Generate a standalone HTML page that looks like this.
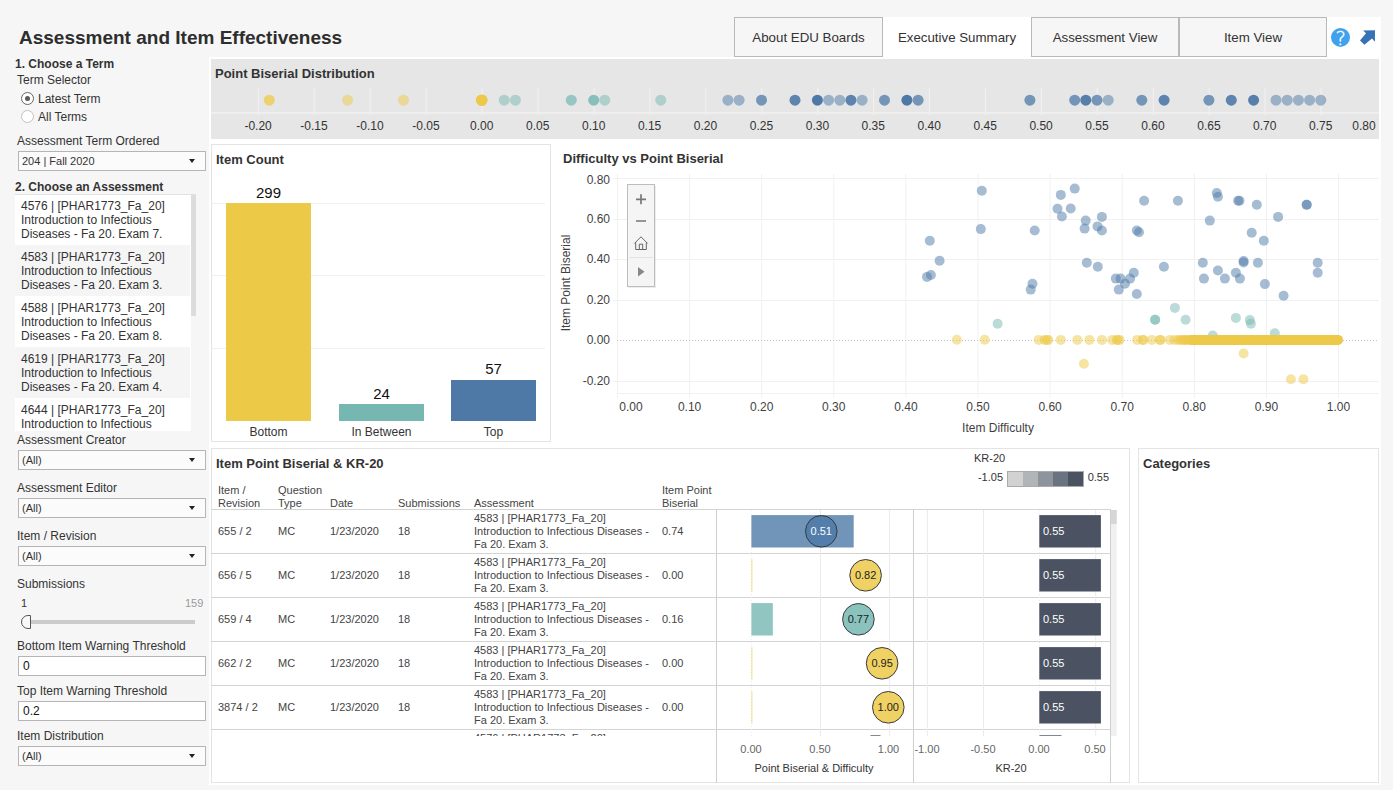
<!DOCTYPE html>
<html><head><meta charset="utf-8"><title>Assessment and Item Effectiveness</title>
<style>
*{box-sizing:border-box}
html,body{margin:0;padding:0}
body{width:1393px;height:790px;overflow:hidden;background:#f6f6f6;font-family:"Liberation Sans", Arial, sans-serif;color:#333;position:relative;font-size:12px}
.abs,.abs>*{position:absolute}
.a{position:absolute;white-space:nowrap}
.title{left:19px;top:26.5px;font-size:19px;font-weight:bold;color:#2e2e2e;line-height:22px}
.tab{position:absolute;top:17px;height:40px;width:149px;border:1px solid #b9b9b9;font-size:13.3px;line-height:40px;text-align:center;color:#333;background:#f6f6f6}
.tab.sel{background:#fff;border-color:#fff;height:42px}
.h{font-weight:bold;font-size:12px;color:#333}
.lbl{font-size:12px;color:#333}
.dd{position:absolute;left:18px;width:188px;height:20px;border:1px solid #b5b5b5;background:#fbfbfb;font-size:11px;line-height:18px;padding-left:3px;color:#333}
.dd:after{content:"";position:absolute;right:10px;top:7px;border-left:3px solid transparent;border-right:3px solid transparent;border-top:4px solid #222}
.inp{position:absolute;left:18px;width:188px;height:20px;border:1px solid #b5b5b5;background:#fff;font-size:12px;line-height:18px;padding-left:4px;color:#111}
.panel{position:absolute;background:#fff;border:1px solid #e4e4e4}
.pt{position:absolute;font-weight:bold;font-size:13px;color:#333;white-space:nowrap}
.li{position:absolute;left:0;width:175px;height:51px;padding:4px 0 0 6px;font-size:12px;line-height:14px;color:#333;white-space:nowrap}
.tr{position:absolute;left:0;width:505px;height:44px;border-bottom:1px solid #d4d4d4;font-size:11px;color:#444}
.tr span{position:absolute;top:15px;line-height:13px;white-space:nowrap}
.tr .as{position:absolute;left:263px;top:2px;line-height:13px;white-space:nowrap}
.th{position:absolute;font-size:11px;line-height:13px;color:#444;white-space:nowrap}
svg text{font-family:"Liberation Sans", Arial, sans-serif}
</style></head><body>

<div class="a title">Assessment and Item Effectiveness</div>

<div class="tab" style="left:734px">About EDU Boards</div>
<div class="tab sel" style="left:883px;width:148px">Executive Summary</div>
<div class="tab" style="left:1031px;width:148px">Assessment View</div>
<div class="tab" style="left:1179px;width:148px">Item View</div>
<div style="position:absolute;left:1327px;top:17px;width:54px;height:42px;background:#fff"></div>
<svg style="position:absolute;left:1327px;top:17px" width="53" height="42" viewBox="0 0 53 42">
<circle cx="13.5" cy="20.4" r="9.5" fill="#41a1ec"/>
<text x="13.6" y="27.5" text-anchor="middle" font-size="19.5" font-weight="200" stroke="#fff" stroke-width="0.35" style="font-family:'DejaVu Sans Light','DejaVu Sans',sans-serif" fill="#fff">?</text>
<path d="M36.1 13.4 L48 13.3 L47.9 24.7 L45 21.6 L37.4 27.8 L33 23.5 L39 16.3 Z" fill="#3672b4"/>
</svg>

<!-- left controls -->
<div class="a h" style="left:15px;top:57px">1. Choose a Term</div>
<div class="a lbl" style="left:17px;top:73px">Term Selector</div>
<div style="position:absolute;left:21px;top:92px;width:13px;height:13px;border:1px solid #666;border-radius:50%;background:#fff"></div>
<div style="position:absolute;left:25px;top:96px;width:5px;height:5px;border-radius:50%;background:#5a5a5a"></div>
<div class="a lbl" style="left:38px;top:92px">Latest Term</div>
<div style="position:absolute;left:21px;top:110px;width:13px;height:13px;border:1px solid #c2c2c2;border-radius:50%;background:#fff"></div>
<div class="a lbl" style="left:38px;top:110px">All Terms</div>
<div class="a lbl" style="left:17px;top:134px">Assessment Term Ordered</div>
<div class="dd" style="top:151px">204 | Fall 2020</div>
<div class="a h" style="left:15px;top:180px">2. Choose an Assessment</div>
<div style="position:absolute;left:15px;top:194px;width:181px;height:1px;background:#e2e2e2"></div>
<div style="position:absolute;left:15px;top:195px;width:176px;height:236px;overflow:hidden;background:#fff"><div class="li" style="top:0px;padding-top:4px;background:#fff">4576 | [PHAR1773_Fa_20]<br>Introduction to Infectious<br>Diseases - Fa 20. Exam 7.</div><div class="li" style="top:50px;padding-top:5px;background:#f5f5f5">4583 | [PHAR1773_Fa_20]<br>Introduction to Infectious<br>Diseases - Fa 20. Exam 3.</div><div class="li" style="top:101px;padding-top:5px;background:#fff">4588 | [PHAR1773_Fa_20]<br>Introduction to Infectious<br>Diseases - Fa 20. Exam 8.</div><div class="li" style="top:152px;padding-top:5px;background:#f5f5f5">4619 | [PHAR1773_Fa_20]<br>Introduction to Infectious<br>Diseases - Fa 20. Exam 4.</div><div class="li" style="top:203px;padding-top:5px;background:#fff">4644 | [PHAR1773_Fa_20]<br>Introduction to Infectious<br>Diseases - Fa 20. Exam 9.</div></div>
<div style="position:absolute;left:191px;top:195px;width:5px;height:121px;background:#dcdcdc"></div>
<div class="a lbl" style="left:17px;top:433px">Assessment Creator</div>
<div class="dd" style="top:450px">(All)</div>
<div class="a lbl" style="left:17px;top:481px">Assessment Editor</div>
<div class="dd" style="top:498px">(All)</div>
<div class="a lbl" style="left:17px;top:529px">Item / Revision</div>
<div class="dd" style="top:546px">(All)</div>
<div class="a lbl" style="left:17px;top:577px">Submissions</div>
<div class="a" style="left:21px;top:597px;font-size:11px;color:#333">1</div>
<div class="a" style="left:185px;top:597px;font-size:11px;color:#9a9a9a">159</div>
<div style="position:absolute;left:27px;top:619.500px;width:168px;height:4.500px;background:#cbcbcb"></div>
<div style="position:absolute;left:21px;top:615px;width:10px;height:14px;border:1px solid #555;border-radius:7px 0 0 7px;background:#f8f8f8"></div>
<div class="a lbl" style="left:17px;top:639px">Bottom Item Warning Threshold</div>
<div class="inp" style="top:656px">0</div>
<div class="a lbl" style="left:17px;top:684px">Top Item Warning Threshold</div>
<div class="inp" style="top:701px">0.2</div>
<div class="a lbl" style="left:17px;top:729px">Item Distribution</div>
<div class="dd" style="top:746px">(All)</div>

<div style="position:absolute;left:209px;top:57px;width:1172px;height:728px;background:#fff"></div>
<!-- distribution -->
<div style="position:absolute;left:211.300px;top:59.300px;width:1167.500px;height:80.100px;background:#e6e6e6"></div>
<div class="pt" style="left:215px;top:66px">Point Biserial Distribution</div>
<svg style="position:absolute;left:211px;top:58px" width="1168" height="82" viewBox="0 0 1168 82" font-size="12" fill="#333">
<line x1="0" y1="54.9" x2="1168" y2="54.9" stroke="#f3f3f3" stroke-width="1.2"/>
<line x1="47.4" y1="30.3" x2="47.4" y2="57.5" stroke="#f0f0f0" stroke-width="1.2"/><line x1="103.3" y1="30.3" x2="103.3" y2="57.5" stroke="#f0f0f0" stroke-width="1.2"/><line x1="159.2" y1="30.3" x2="159.2" y2="57.5" stroke="#f0f0f0" stroke-width="1.2"/><line x1="215.2" y1="30.3" x2="215.2" y2="57.5" stroke="#f0f0f0" stroke-width="1.2"/><line x1="271.1" y1="30.3" x2="271.1" y2="57.5" stroke="#f0f0f0" stroke-width="1.2"/><line x1="327.0" y1="30.3" x2="327.0" y2="57.5" stroke="#f0f0f0" stroke-width="1.2"/><line x1="383.0" y1="30.3" x2="383.0" y2="57.5" stroke="#f0f0f0" stroke-width="1.2"/><line x1="438.9" y1="30.3" x2="438.9" y2="57.5" stroke="#f0f0f0" stroke-width="1.2"/><line x1="494.8" y1="30.3" x2="494.8" y2="57.5" stroke="#f0f0f0" stroke-width="1.2"/><line x1="550.8" y1="30.3" x2="550.8" y2="57.5" stroke="#f0f0f0" stroke-width="1.2"/><line x1="606.7" y1="30.3" x2="606.7" y2="57.5" stroke="#f0f0f0" stroke-width="1.2"/><line x1="662.6" y1="30.3" x2="662.6" y2="57.5" stroke="#f0f0f0" stroke-width="1.2"/><line x1="718.5" y1="30.3" x2="718.5" y2="57.5" stroke="#f0f0f0" stroke-width="1.2"/><line x1="774.5" y1="30.3" x2="774.5" y2="57.5" stroke="#f0f0f0" stroke-width="1.2"/><line x1="830.4" y1="30.3" x2="830.4" y2="57.5" stroke="#f0f0f0" stroke-width="1.2"/><line x1="886.3" y1="30.3" x2="886.3" y2="57.5" stroke="#f0f0f0" stroke-width="1.2"/><line x1="942.3" y1="30.3" x2="942.3" y2="57.5" stroke="#f0f0f0" stroke-width="1.2"/><line x1="998.2" y1="30.3" x2="998.2" y2="57.5" stroke="#f0f0f0" stroke-width="1.2"/><line x1="1054.1" y1="30.3" x2="1054.1" y2="57.5" stroke="#f0f0f0" stroke-width="1.2"/><line x1="1110.0" y1="30.3" x2="1110.0" y2="57.5" stroke="#f0f0f0" stroke-width="1.2"/><circle cx="58.3" cy="42.2" r="5.5" fill="#edc948" fill-opacity="0.75"/><circle cx="136.6" cy="42.2" r="5.5" fill="#edc948" fill-opacity="0.5"/><circle cx="192.5" cy="42.2" r="5.5" fill="#edc948" fill-opacity="0.5"/><circle cx="270.8" cy="42.2" r="5.5" fill="#edc948" fill-opacity="0.9"/><circle cx="270.8" cy="42.2" r="5.5" fill="#edc948" fill-opacity="0.9"/><circle cx="270.8" cy="42.2" r="5.5" fill="#edc948" fill-opacity="0.9"/><circle cx="270.8" cy="42.2" r="5.5" fill="#edc948" fill-opacity="0.9"/><circle cx="270.8" cy="42.2" r="5.5" fill="#edc948" fill-opacity="0.9"/><circle cx="270.8" cy="42.2" r="5.5" fill="#edc948" fill-opacity="0.9"/><circle cx="293.2" cy="42.2" r="5.5" fill="#76b7b2" fill-opacity="0.5"/><circle cx="304.4" cy="42.2" r="5.5" fill="#76b7b2" fill-opacity="0.5"/><circle cx="360.3" cy="42.2" r="5.5" fill="#76b7b2" fill-opacity="0.7"/><circle cx="382.7" cy="42.2" r="5.5" fill="#76b7b2" fill-opacity="0.85"/><circle cx="393.8" cy="42.2" r="5.5" fill="#76b7b2" fill-opacity="0.5"/><circle cx="449.8" cy="42.2" r="5.5" fill="#76b7b2" fill-opacity="0.5"/><circle cx="516.9" cy="42.2" r="5.5" fill="#4e79a7" fill-opacity="0.5"/><circle cx="528.1" cy="42.2" r="5.5" fill="#4e79a7" fill-opacity="0.5"/><circle cx="550.5" cy="42.2" r="5.5" fill="#4e79a7" fill-opacity="0.75"/><circle cx="584.0" cy="42.2" r="5.5" fill="#4e79a7" fill-opacity="0.9"/><circle cx="606.4" cy="42.2" r="5.5" fill="#4e79a7" fill-opacity="1"/><circle cx="617.6" cy="42.2" r="5.5" fill="#4e79a7" fill-opacity="0.5"/><circle cx="628.8" cy="42.2" r="5.5" fill="#4e79a7" fill-opacity="0.5"/><circle cx="639.9" cy="42.2" r="5.5" fill="#4e79a7" fill-opacity="0.9"/><circle cx="651.1" cy="42.2" r="5.5" fill="#4e79a7" fill-opacity="0.5"/><circle cx="673.5" cy="42.2" r="5.5" fill="#4e79a7" fill-opacity="0.75"/><circle cx="695.9" cy="42.2" r="5.5" fill="#4e79a7" fill-opacity="1"/><circle cx="707.1" cy="42.2" r="5.5" fill="#4e79a7" fill-opacity="0.75"/><circle cx="818.9" cy="42.2" r="5.5" fill="#4e79a7" fill-opacity="0.75"/><circle cx="863.7" cy="42.2" r="5.5" fill="#4e79a7" fill-opacity="0.75"/><circle cx="874.8" cy="42.2" r="5.5" fill="#4e79a7" fill-opacity="0.95"/><circle cx="886.0" cy="42.2" r="5.5" fill="#4e79a7" fill-opacity="0.75"/><circle cx="897.2" cy="42.2" r="5.5" fill="#4e79a7" fill-opacity="0.5"/><circle cx="930.8" cy="42.2" r="5.5" fill="#4e79a7" fill-opacity="0.75"/><circle cx="953.1" cy="42.2" r="5.5" fill="#4e79a7" fill-opacity="0.9"/><circle cx="997.9" cy="42.2" r="5.5" fill="#4e79a7" fill-opacity="0.75"/><circle cx="1020.3" cy="42.2" r="5.5" fill="#4e79a7" fill-opacity="0.9"/><circle cx="1042.6" cy="42.2" r="5.5" fill="#4e79a7" fill-opacity="0.95"/><circle cx="1065.0" cy="42.2" r="5.5" fill="#4e79a7" fill-opacity="0.5"/><circle cx="1076.2" cy="42.2" r="5.5" fill="#4e79a7" fill-opacity="0.5"/><circle cx="1087.4" cy="42.2" r="5.5" fill="#4e79a7" fill-opacity="0.5"/><circle cx="1098.6" cy="42.2" r="5.5" fill="#4e79a7" fill-opacity="0.5"/><circle cx="1109.8" cy="42.2" r="5.5" fill="#4e79a7" fill-opacity="0.5"/><text x="47.1" y="71.6" text-anchor="middle">-0.20</text><text x="103.0" y="71.6" text-anchor="middle">-0.15</text><text x="158.9" y="71.6" text-anchor="middle">-0.10</text><text x="214.9" y="71.6" text-anchor="middle">-0.05</text><text x="270.8" y="71.6" text-anchor="middle">0.00</text><text x="326.7" y="71.6" text-anchor="middle">0.05</text><text x="382.7" y="71.6" text-anchor="middle">0.10</text><text x="438.6" y="71.6" text-anchor="middle">0.15</text><text x="494.5" y="71.6" text-anchor="middle">0.20</text><text x="550.5" y="71.6" text-anchor="middle">0.25</text><text x="606.4" y="71.6" text-anchor="middle">0.30</text><text x="662.3" y="71.6" text-anchor="middle">0.35</text><text x="718.2" y="71.6" text-anchor="middle">0.40</text><text x="774.2" y="71.6" text-anchor="middle">0.45</text><text x="830.1" y="71.6" text-anchor="middle">0.50</text><text x="886.0" y="71.6" text-anchor="middle">0.55</text><text x="942.0" y="71.6" text-anchor="middle">0.60</text><text x="997.9" y="71.6" text-anchor="middle">0.65</text><text x="1053.8" y="71.6" text-anchor="middle">0.70</text><text x="1109.8" y="71.6" text-anchor="middle">0.75</text><text x="1153.0" y="71.6" text-anchor="middle">0.80</text>
</svg>

<!-- item count -->
<div class="panel" style="left:211px;top:144px;width:340px;height:298px"></div>
<div class="pt" style="left:216px;top:152px">Item Count</div>
<svg style="position:absolute;left:211px;top:144px" width="340" height="298" viewBox="0 0 340 298" font-size="15" fill="#111">
<line x1="1" y1="59.5" x2="334" y2="59.5" stroke="#f1f1f1"/>
<line x1="1" y1="131.5" x2="334" y2="131.5" stroke="#f1f1f1"/>
<line x1="1" y1="204.5" x2="334" y2="204.5" stroke="#f1f1f1"/>
<rect x="15" y="59" width="85" height="218" fill="#edc948"/>
<rect x="128" y="260" width="85" height="17" fill="#76b7b2"/>
<rect x="240" y="236" width="85" height="41" fill="#4e79a7"/>
<text x="57.5" y="53.5" text-anchor="middle">299</text>
<text x="170.5" y="254.500" text-anchor="middle">24</text>
<text x="282.5" y="230" text-anchor="middle">57</text>
<g font-size="12" fill="#333"><text x="57.5" y="292" text-anchor="middle">Bottom</text><text x="170.5" y="292" text-anchor="middle">In Between</text><text x="282.5" y="292" text-anchor="middle">Top</text></g>
</svg>

<!-- scatter -->

<div class="pt" style="left:563px;top:151px">Difficulty vs Point Biserial</div>
<svg style="position:absolute;left:556px;top:144px" width="823" height="298" viewBox="0 0 823 298" font-size="12" fill="#3f3f3f">
<line x1="61.5" y1="29.5" x2="61.5" y2="254" stroke="#f1f1f1"/><line x1="133.6" y1="29.5" x2="133.6" y2="254" stroke="#f1f1f1"/><line x1="205.7" y1="29.5" x2="205.7" y2="254" stroke="#f1f1f1"/><line x1="277.8" y1="29.5" x2="277.8" y2="254" stroke="#f1f1f1"/><line x1="349.9" y1="29.5" x2="349.9" y2="254" stroke="#f1f1f1"/><line x1="422.0" y1="29.5" x2="422.0" y2="254" stroke="#f1f1f1"/><line x1="494.1" y1="29.5" x2="494.1" y2="254" stroke="#f1f1f1"/><line x1="566.2" y1="29.5" x2="566.2" y2="254" stroke="#f1f1f1"/><line x1="638.3" y1="29.5" x2="638.3" y2="254" stroke="#f1f1f1"/><line x1="710.4" y1="29.5" x2="710.4" y2="254" stroke="#f1f1f1"/><line x1="782.5" y1="29.5" x2="782.5" y2="254" stroke="#f1f1f1"/><line x1="57" y1="237.5" x2="823" y2="237.5" stroke="#f1f1f1"/><line x1="61" y1="196.5" x2="823" y2="196.5" stroke="#c2c2c2" stroke-dasharray="1,2"/><line x1="57" y1="156.5" x2="823" y2="156.5" stroke="#f1f1f1"/><line x1="57" y1="115.5" x2="823" y2="115.5" stroke="#f1f1f1"/><line x1="57" y1="75.5" x2="823" y2="75.5" stroke="#f1f1f1"/><line x1="57" y1="34.5" x2="823" y2="34.5" stroke="#f1f1f1"/><line x1="61" y1="249.5" x2="823" y2="249.5" stroke="#f1f1f1"/>
<circle cx="425.8" cy="46.8" r="5" fill="#4e79a7" fill-opacity="0.5"/><circle cx="478.7" cy="86.5" r="5" fill="#4e79a7" fill-opacity="0.5"/><circle cx="476.5" cy="139.7" r="5" fill="#4e79a7" fill-opacity="0.5"/><circle cx="474.7" cy="145.6" r="5" fill="#4e79a7" fill-opacity="0.5"/><circle cx="504.8" cy="50.9" r="5" fill="#4e79a7" fill-opacity="0.5"/><circle cx="518.7" cy="44.6" r="5" fill="#4e79a7" fill-opacity="0.5"/><circle cx="501.5" cy="64.8" r="5" fill="#4e79a7" fill-opacity="0.5"/><circle cx="514.7" cy="64.5" r="5" fill="#4e79a7" fill-opacity="0.5"/><circle cx="505.9" cy="72.5" r="5" fill="#4e79a7" fill-opacity="0.5"/><circle cx="529.7" cy="76.6" r="5" fill="#4e79a7" fill-opacity="0.5"/><circle cx="545.9" cy="72.9" r="5" fill="#4e79a7" fill-opacity="0.5"/><circle cx="528.6" cy="84.6" r="5" fill="#4e79a7" fill-opacity="0.5"/><circle cx="541.5" cy="82.4" r="5" fill="#4e79a7" fill-opacity="0.5"/><circle cx="545.9" cy="86.5" r="5" fill="#4e79a7" fill-opacity="0.5"/><circle cx="530.8" cy="118.8" r="5" fill="#4e79a7" fill-opacity="0.5"/><circle cx="541.8" cy="122.8" r="5" fill="#4e79a7" fill-opacity="0.5"/><circle cx="559.8" cy="134.6" r="5" fill="#4e79a7" fill-opacity="0.5"/><circle cx="564.6" cy="134.6" r="5" fill="#4e79a7" fill-opacity="0.5"/><circle cx="569.0" cy="139.7" r="5" fill="#4e79a7" fill-opacity="0.5"/><circle cx="574.1" cy="134.6" r="5" fill="#4e79a7" fill-opacity="0.5"/><circle cx="577.8" cy="128.7" r="5" fill="#4e79a7" fill-opacity="0.5"/><circle cx="562.8" cy="145.6" r="5" fill="#4e79a7" fill-opacity="0.5"/><circle cx="580.8" cy="150.0" r="5" fill="#4e79a7" fill-opacity="0.5"/><circle cx="580.8" cy="86.5" r="5" fill="#4e79a7" fill-opacity="0.5"/><circle cx="583.0" cy="88.3" r="5" fill="#4e79a7" fill-opacity="0.5"/><circle cx="588.1" cy="56.7" r="5" fill="#4e79a7" fill-opacity="0.5"/><circle cx="607.9" cy="122.8" r="5" fill="#4e79a7" fill-opacity="0.5"/><circle cx="621.9" cy="56.7" r="5" fill="#4e79a7" fill-opacity="0.5"/><circle cx="646.8" cy="118.8" r="5" fill="#4e79a7" fill-opacity="0.5"/><circle cx="647.9" cy="134.6" r="5" fill="#4e79a7" fill-opacity="0.5"/><circle cx="653.8" cy="76.6" r="5" fill="#4e79a7" fill-opacity="0.5"/><circle cx="660.8" cy="49.0" r="5" fill="#4e79a7" fill-opacity="0.5"/><circle cx="661.9" cy="52.7" r="5" fill="#4e79a7" fill-opacity="0.5"/><circle cx="661.9" cy="126.5" r="5" fill="#4e79a7" fill-opacity="0.5"/><circle cx="668.9" cy="134.6" r="5" fill="#4e79a7" fill-opacity="0.5"/><circle cx="679.9" cy="128.7" r="5" fill="#4e79a7" fill-opacity="0.5"/><circle cx="683.9" cy="134.6" r="5" fill="#4e79a7" fill-opacity="0.5"/><circle cx="682.1" cy="56.7" r="5" fill="#4e79a7" fill-opacity="0.5"/><circle cx="683.5" cy="56.7" r="5" fill="#4e79a7" fill-opacity="0.5"/><circle cx="687.6" cy="117.0" r="5" fill="#4e79a7" fill-opacity="0.5"/><circle cx="687.6" cy="118.4" r="5" fill="#4e79a7" fill-opacity="0.5"/><circle cx="695.7" cy="88.7" r="5" fill="#4e79a7" fill-opacity="0.5"/><circle cx="700.8" cy="60.8" r="5" fill="#4e79a7" fill-opacity="0.5"/><circle cx="701.9" cy="118.8" r="5" fill="#4e79a7" fill-opacity="0.5"/><circle cx="707.8" cy="96.8" r="5" fill="#4e79a7" fill-opacity="0.5"/><circle cx="708.9" cy="140.1" r="5" fill="#4e79a7" fill-opacity="0.5"/><circle cx="722.1" cy="72.9" r="5" fill="#4e79a7" fill-opacity="0.5"/><circle cx="727.6" cy="151.8" r="5" fill="#4e79a7" fill-opacity="0.5"/><circle cx="750.7" cy="60.8" r="5" fill="#4e79a7" fill-opacity="0.5"/><circle cx="750.7" cy="60.8" r="5" fill="#4e79a7" fill-opacity="0.5"/><circle cx="761.7" cy="118.8" r="5" fill="#4e79a7" fill-opacity="0.5"/><circle cx="761.7" cy="128.7" r="5" fill="#4e79a7" fill-opacity="0.5"/><circle cx="424.8" cy="85.1" r="5" fill="#4e79a7" fill-opacity="0.5"/><circle cx="373.8" cy="96.8" r="5" fill="#4e79a7" fill-opacity="0.5"/><circle cx="383.6" cy="116.8" r="5" fill="#4e79a7" fill-opacity="0.5"/><circle cx="374.9" cy="131.0" r="5" fill="#4e79a7" fill-opacity="0.5"/><circle cx="371.0" cy="132.9" r="5" fill="#4e79a7" fill-opacity="0.5"/><circle cx="441.6" cy="179.7" r="5" fill="#76b7b2" fill-opacity="0.5"/><circle cx="599.1" cy="175.7" r="5" fill="#76b7b2" fill-opacity="0.5"/><circle cx="599.1" cy="175.7" r="5" fill="#76b7b2" fill-opacity="0.5"/><circle cx="618.9" cy="163.9" r="5" fill="#76b7b2" fill-opacity="0.5"/><circle cx="629.6" cy="175.7" r="5" fill="#76b7b2" fill-opacity="0.5"/><circle cx="679.9" cy="173.9" r="5" fill="#76b7b2" fill-opacity="0.5"/><circle cx="693.8" cy="176.1" r="5" fill="#76b7b2" fill-opacity="0.5"/><circle cx="694.9" cy="179.7" r="5" fill="#76b7b2" fill-opacity="0.5"/><circle cx="656.7" cy="191.5" r="5" fill="#76b7b2" fill-opacity="0.5"/><circle cx="718.8" cy="189.3" r="5" fill="#76b7b2" fill-opacity="0.5"/><circle cx="527.9" cy="219.7" r="5" fill="#edc948" fill-opacity="0.5"/><circle cx="687.6" cy="209.5" r="5" fill="#edc948" fill-opacity="0.5"/><circle cx="734.9" cy="235.2" r="5" fill="#edc948" fill-opacity="0.5"/><circle cx="747.4" cy="235.2" r="5" fill="#edc948" fill-opacity="0.5"/><circle cx="482.7" cy="195.9" r="5" fill="#edc948" fill-opacity="0.5"/><circle cx="488.6" cy="195.9" r="5" fill="#edc948" fill-opacity="0.5"/><circle cx="490.8" cy="195.9" r="5" fill="#edc948" fill-opacity="0.5"/><circle cx="492.3" cy="195.9" r="5" fill="#edc948" fill-opacity="0.5"/><circle cx="504.8" cy="195.9" r="5" fill="#edc948" fill-opacity="0.5"/><circle cx="521.3" cy="195.9" r="5" fill="#edc948" fill-opacity="0.5"/><circle cx="533.4" cy="195.9" r="5" fill="#edc948" fill-opacity="0.5"/><circle cx="545.9" cy="195.9" r="5" fill="#edc948" fill-opacity="0.5"/><circle cx="556.2" cy="195.9" r="5" fill="#edc948" fill-opacity="0.5"/><circle cx="560.6" cy="195.9" r="5" fill="#edc948" fill-opacity="0.5"/><circle cx="562.0" cy="195.9" r="5" fill="#edc948" fill-opacity="0.5"/><circle cx="563.5" cy="195.9" r="5" fill="#edc948" fill-opacity="0.5"/><circle cx="581.1" cy="195.9" r="5" fill="#edc948" fill-opacity="0.5"/><circle cx="586.6" cy="195.9" r="5" fill="#edc948" fill-opacity="0.5"/><circle cx="587.4" cy="195.9" r="5" fill="#edc948" fill-opacity="0.5"/><circle cx="595.8" cy="195.9" r="5" fill="#edc948" fill-opacity="0.5"/><circle cx="603.9" cy="195.9" r="5" fill="#edc948" fill-opacity="0.5"/><circle cx="604.6" cy="195.9" r="5" fill="#edc948" fill-opacity="0.5"/><circle cx="613.8" cy="195.9" r="5" fill="#edc948" fill-opacity="0.5"/><circle cx="618.6" cy="195.9" r="5" fill="#edc948" fill-opacity="0.5"/><circle cx="622.2" cy="195.9" r="5" fill="#edc948" fill-opacity="0.5"/><circle cx="624.4" cy="195.9" r="5" fill="#edc948" fill-opacity="0.5"/><circle cx="626.6" cy="195.9" r="5" fill="#edc948" fill-opacity="0.5"/><circle cx="628.1" cy="195.9" r="5" fill="#edc948" fill-opacity="0.5"/><circle cx="400.8" cy="195.7" r="5" fill="#edc948" fill-opacity="0.5"/><circle cx="428.7" cy="195.7" r="5" fill="#edc948" fill-opacity="0.5"/><circle cx="629.6" cy="195.9" r="5" fill="#edc948" fill-opacity="0.5"/><circle cx="631.4" cy="195.9" r="5" fill="#edc948" fill-opacity="0.5"/><circle cx="633.3" cy="195.9" r="5" fill="#edc948" fill-opacity="0.5"/><circle cx="635.1" cy="195.9" r="5" fill="#edc948" fill-opacity="0.5"/><circle cx="636.9" cy="195.9" r="5" fill="#edc948" fill-opacity="0.5"/><circle cx="638.8" cy="195.9" r="5" fill="#edc948" fill-opacity="0.5"/><circle cx="640.6" cy="195.9" r="5" fill="#edc948" fill-opacity="0.5"/><circle cx="642.4" cy="195.9" r="5" fill="#edc948" fill-opacity="0.5"/><circle cx="644.3" cy="195.9" r="5" fill="#edc948" fill-opacity="0.5"/><circle cx="646.1" cy="195.9" r="5" fill="#edc948" fill-opacity="0.5"/><circle cx="647.9" cy="195.9" r="5" fill="#edc948" fill-opacity="0.5"/><circle cx="649.8" cy="195.9" r="5" fill="#edc948" fill-opacity="0.5"/><circle cx="651.6" cy="195.9" r="5" fill="#edc948" fill-opacity="0.5"/><circle cx="653.4" cy="195.9" r="5" fill="#edc948" fill-opacity="0.5"/><circle cx="655.3" cy="195.9" r="5" fill="#edc948" fill-opacity="0.5"/><circle cx="657.1" cy="195.9" r="5" fill="#edc948" fill-opacity="0.5"/><circle cx="658.9" cy="195.9" r="5" fill="#edc948" fill-opacity="0.5"/><circle cx="660.8" cy="195.9" r="5" fill="#edc948" fill-opacity="0.5"/><circle cx="662.6" cy="195.9" r="5" fill="#edc948" fill-opacity="0.5"/><circle cx="664.5" cy="195.9" r="5" fill="#edc948" fill-opacity="0.5"/><circle cx="666.3" cy="195.9" r="5" fill="#edc948" fill-opacity="0.5"/><circle cx="668.1" cy="195.9" r="5" fill="#edc948" fill-opacity="0.5"/><circle cx="670.0" cy="195.9" r="5" fill="#edc948" fill-opacity="0.5"/><circle cx="671.8" cy="195.9" r="5" fill="#edc948" fill-opacity="0.5"/><circle cx="673.6" cy="195.9" r="5" fill="#edc948" fill-opacity="0.5"/><circle cx="675.5" cy="195.9" r="5" fill="#edc948" fill-opacity="0.5"/><circle cx="677.3" cy="195.9" r="5" fill="#edc948" fill-opacity="0.5"/><circle cx="679.1" cy="195.9" r="5" fill="#edc948" fill-opacity="0.5"/><circle cx="681.0" cy="195.9" r="5" fill="#edc948" fill-opacity="0.5"/><circle cx="682.8" cy="195.9" r="5" fill="#edc948" fill-opacity="0.5"/><circle cx="684.6" cy="195.9" r="5" fill="#edc948" fill-opacity="0.5"/><circle cx="686.5" cy="195.9" r="5" fill="#edc948" fill-opacity="0.5"/><circle cx="688.3" cy="195.9" r="5" fill="#edc948" fill-opacity="0.5"/><circle cx="690.2" cy="195.9" r="5" fill="#edc948" fill-opacity="0.5"/><circle cx="692.0" cy="195.9" r="5" fill="#edc948" fill-opacity="0.5"/><circle cx="693.8" cy="195.9" r="5" fill="#edc948" fill-opacity="0.5"/><circle cx="695.7" cy="195.9" r="5" fill="#edc948" fill-opacity="0.5"/><circle cx="697.5" cy="195.9" r="5" fill="#edc948" fill-opacity="0.5"/><circle cx="699.3" cy="195.9" r="5" fill="#edc948" fill-opacity="0.5"/><circle cx="701.2" cy="195.9" r="5" fill="#edc948" fill-opacity="0.5"/><circle cx="703.0" cy="195.9" r="5" fill="#edc948" fill-opacity="0.5"/><circle cx="704.8" cy="195.9" r="5" fill="#edc948" fill-opacity="0.5"/><circle cx="706.7" cy="195.9" r="5" fill="#edc948" fill-opacity="0.5"/><circle cx="708.5" cy="195.9" r="5" fill="#edc948" fill-opacity="0.5"/><circle cx="710.3" cy="195.9" r="5" fill="#edc948" fill-opacity="0.5"/><circle cx="712.2" cy="195.9" r="5" fill="#edc948" fill-opacity="0.5"/><circle cx="714.0" cy="195.9" r="5" fill="#edc948" fill-opacity="0.5"/><circle cx="715.9" cy="195.9" r="5" fill="#edc948" fill-opacity="0.5"/><circle cx="717.7" cy="195.9" r="5" fill="#edc948" fill-opacity="0.5"/><circle cx="719.5" cy="195.9" r="5" fill="#edc948" fill-opacity="0.5"/><circle cx="721.4" cy="195.9" r="5" fill="#edc948" fill-opacity="0.5"/><circle cx="723.2" cy="195.9" r="5" fill="#edc948" fill-opacity="0.5"/><circle cx="725.0" cy="195.9" r="5" fill="#edc948" fill-opacity="0.5"/><circle cx="726.9" cy="195.9" r="5" fill="#edc948" fill-opacity="0.5"/><circle cx="728.7" cy="195.9" r="5" fill="#edc948" fill-opacity="0.5"/><circle cx="730.5" cy="195.9" r="5" fill="#edc948" fill-opacity="0.5"/><circle cx="732.4" cy="195.9" r="5" fill="#edc948" fill-opacity="0.5"/><circle cx="734.2" cy="195.9" r="5" fill="#edc948" fill-opacity="0.5"/><circle cx="736.0" cy="195.9" r="5" fill="#edc948" fill-opacity="0.5"/><circle cx="737.9" cy="195.9" r="5" fill="#edc948" fill-opacity="0.5"/><circle cx="739.7" cy="195.9" r="5" fill="#edc948" fill-opacity="0.5"/><circle cx="741.5" cy="195.9" r="5" fill="#edc948" fill-opacity="0.5"/><circle cx="743.4" cy="195.9" r="5" fill="#edc948" fill-opacity="0.5"/><circle cx="745.2" cy="195.9" r="5" fill="#edc948" fill-opacity="0.5"/><circle cx="747.1" cy="195.9" r="5" fill="#edc948" fill-opacity="0.5"/><circle cx="748.9" cy="195.9" r="5" fill="#edc948" fill-opacity="0.5"/><circle cx="750.7" cy="195.9" r="5" fill="#edc948" fill-opacity="0.5"/><circle cx="752.6" cy="195.9" r="5" fill="#edc948" fill-opacity="0.5"/><circle cx="754.4" cy="195.9" r="5" fill="#edc948" fill-opacity="0.5"/><circle cx="756.2" cy="195.9" r="5" fill="#edc948" fill-opacity="0.5"/><circle cx="758.1" cy="195.9" r="5" fill="#edc948" fill-opacity="0.5"/><circle cx="759.9" cy="195.9" r="5" fill="#edc948" fill-opacity="0.5"/><circle cx="761.7" cy="195.9" r="5" fill="#edc948" fill-opacity="0.5"/><circle cx="763.6" cy="195.9" r="5" fill="#edc948" fill-opacity="0.5"/><circle cx="765.4" cy="195.9" r="5" fill="#edc948" fill-opacity="0.5"/><circle cx="767.2" cy="195.9" r="5" fill="#edc948" fill-opacity="0.5"/><circle cx="769.1" cy="195.9" r="5" fill="#edc948" fill-opacity="0.5"/><circle cx="770.9" cy="195.9" r="5" fill="#edc948" fill-opacity="0.5"/><circle cx="772.8" cy="195.9" r="5" fill="#edc948" fill-opacity="0.5"/><circle cx="774.6" cy="195.9" r="5" fill="#edc948" fill-opacity="0.5"/><circle cx="776.4" cy="195.9" r="5" fill="#edc948" fill-opacity="0.5"/><circle cx="778.3" cy="195.9" r="5" fill="#edc948" fill-opacity="0.5"/><circle cx="780.1" cy="195.9" r="5" fill="#edc948" fill-opacity="0.5"/><circle cx="781.9" cy="195.9" r="5" fill="#edc948" fill-opacity="0.5"/><rect x="630.3" y="190.9" width="156.6" height="10" rx="5" fill="#edc948"/>
<text x="75.0" y="267" text-anchor="middle">0.00</text><text x="133.6" y="267" text-anchor="middle">0.10</text><text x="205.7" y="267" text-anchor="middle">0.20</text><text x="277.8" y="267" text-anchor="middle">0.30</text><text x="349.9" y="267" text-anchor="middle">0.40</text><text x="422.0" y="267" text-anchor="middle">0.50</text><text x="494.1" y="267" text-anchor="middle">0.60</text><text x="566.2" y="267" text-anchor="middle">0.70</text><text x="638.3" y="267" text-anchor="middle">0.80</text><text x="710.4" y="267" text-anchor="middle">0.90</text><text x="782.5" y="267" text-anchor="middle">1.00</text><text x="54" y="241.4" text-anchor="end">-0.20</text><text x="54" y="200.4" text-anchor="end">0.00</text><text x="54" y="160.4" text-anchor="end">0.20</text><text x="54" y="119.4" text-anchor="end">0.40</text><text x="54" y="79.4" text-anchor="end">0.60</text><text x="54" y="40.4" text-anchor="end">0.80</text>
<text x="442" y="288" text-anchor="middle">Item Difficulty</text>
<text transform="translate(14,139) rotate(-90)" text-anchor="middle">Item Point Biserial</text>
<rect x="72.5" y="41.500" width="27.500" height="102.500" fill="#000" fill-opacity=".07"/><rect x="71.5" y="40.500" width="27" height="102" fill="#f5f5f5" stroke="#bdbdbd"/>
<line x1="73" y1="113.500" x2="97" y2="113.500" stroke="#e2e2e2"/>
<path d="M80 55.300H90M85 50.300V60.300M80 77H90" stroke="#777" stroke-width="1.700" fill="none"/>
<path d="M78.300 99.500L85 92.800L91.700 99.500M79.700 98.500V105.500H90.300V98.500M83.300 105.500V100.200H86.700V105.500" stroke="#666" stroke-width="1" fill="none"/>
<path d="M82 123L88.500 127.800L82 132.600Z" fill="#888"/>
</svg>

<!-- table -->
<div class="panel" style="left:211px;top:448px;width:919px;height:335px"></div>
<div class="pt" style="left:216px;top:456px">Item Point Biserial &amp; KR-20</div>
<div style="position:absolute;left:211px;top:448px;width:918px;height:335px;overflow:hidden">
<div class="th" style="left:7px;top:36px">Item /<br>Revision</div>
<div class="th" style="left:67px;top:36px">Question<br>Type</div>
<div class="th" style="left:119px;top:49px">Date</div>
<div class="th" style="left:187px;top:49px">Submissions</div>
<div class="th" style="left:263px;top:49px">Assessment</div>
<div class="th" style="left:451px;top:36px">Item Point<br>Biserial</div>
<div style="position:absolute;left:0;top:61px;width:900px;height:1px;background:#d4d4d4"></div>
<div style="position:absolute;left:0;top:62px;width:505px;height:226px;overflow:hidden"><div class="tr" style="top:0px">
<span style="left:7px">655 / 2</span><span style="left:67px">MC</span><span style="left:119px">1/23/2020</span><span style="left:187px">18</span>
<div class="as">4583 | [PHAR1773_Fa_20]<br>Introduction to Infectious Diseases -<br>Fa 20. Exam 3.</div><span style="left:451px">0.74</span></div><div class="tr" style="top:44px">
<span style="left:7px">656 / 5</span><span style="left:67px">MC</span><span style="left:119px">1/23/2020</span><span style="left:187px">18</span>
<div class="as">4583 | [PHAR1773_Fa_20]<br>Introduction to Infectious Diseases -<br>Fa 20. Exam 3.</div><span style="left:451px">0.00</span></div><div class="tr" style="top:88px">
<span style="left:7px">659 / 4</span><span style="left:67px">MC</span><span style="left:119px">1/23/2020</span><span style="left:187px">18</span>
<div class="as">4583 | [PHAR1773_Fa_20]<br>Introduction to Infectious Diseases -<br>Fa 20. Exam 3.</div><span style="left:451px">0.16</span></div><div class="tr" style="top:132px">
<span style="left:7px">662 / 2</span><span style="left:67px">MC</span><span style="left:119px">1/23/2020</span><span style="left:187px">18</span>
<div class="as">4583 | [PHAR1773_Fa_20]<br>Introduction to Infectious Diseases -<br>Fa 20. Exam 3.</div><span style="left:451px">0.00</span></div><div class="tr" style="top:176px">
<span style="left:7px">3874 / 2</span><span style="left:67px">MC</span><span style="left:119px">1/23/2020</span><span style="left:187px">18</span>
<div class="as">4583 | [PHAR1773_Fa_20]<br>Introduction to Infectious Diseases -<br>Fa 20. Exam 3.</div><span style="left:451px">0.00</span></div><div class="tr" style="top:220px">
<span style="left:7px">655 / 2</span><span style="left:67px">MC</span><span style="left:119px">1/23/2020</span><span style="left:187px">18</span>
<div class="as">4576 | [PHAR1773_Fa_20]<br>Introduction to Infectious Diseases -<br>Fa 20. Exam 7.</div><span style="left:451px">0.22</span></div></div>
</div>
<svg style="position:absolute;left:211px;top:448px" width="918" height="335" viewBox="0 0 918 335" font-size="11" fill="#333">
<line x1="505.500" y1="61" x2="505.500" y2="335" stroke="#cfcfcf"/>
<line x1="702.500" y1="61" x2="702.500" y2="335" stroke="#cfcfcf"/>
<line x1="899.500" y1="61" x2="899.500" y2="335" stroke="#cfcfcf"/>
<g stroke="#d4d4d4"><line x1="505" y1="105.5" x2="900" y2="105.5"/><line x1="505" y1="149.5" x2="900" y2="149.5"/><line x1="505" y1="193.5" x2="900" y2="193.5"/><line x1="505" y1="237.5" x2="900" y2="237.5"/><line x1="505" y1="281.5" x2="900" y2="281.5"/></g>
<line x1="540.4" y1="62" x2="540.4" y2="288" stroke="#ebebeb" stroke-dasharray="1,2"/><line x1="609.5" y1="62" x2="609.5" y2="288" stroke="#ebebeb"/><line x1="678.6" y1="62" x2="678.6" y2="288" stroke="#ebebeb"/><line x1="716.4" y1="62" x2="716.4" y2="288" stroke="#ebebeb"/><line x1="772.5" y1="62" x2="772.5" y2="288" stroke="#ebebeb"/><line x1="828.6" y1="62" x2="828.6" y2="288" stroke="#ebebeb" stroke-dasharray="1,2"/><line x1="884.7" y1="62" x2="884.7" y2="288" stroke="#ebebeb"/><rect x="540.4" y="67.1" width="102.3" height="32.4" fill="#4e79a7" fill-opacity="0.8"/><circle cx="610.3" cy="83.3" r="15.8" fill="#4e79a7" fill-opacity=".85" stroke="#3a3a3a" stroke-width="1"/><text x="610.3" y="86.9" text-anchor="middle" fill="#fff">0.51</text><rect x="828.3" y="67.1" width="61.6" height="32.4" fill="#4b5363"/><text x="832" y="86.9" fill="#fff">0.55</text><rect x="540.4" y="111.1" width="1.0" height="32.4" fill="#edc948" fill-opacity="0.6"/><circle cx="654.6" cy="127.3" r="15.8" fill="#edc948" fill-opacity=".85" stroke="#3a3a3a" stroke-width="1"/><text x="654.6" y="130.9" text-anchor="middle" fill="#222">0.82</text><rect x="828.3" y="111.1" width="61.6" height="32.4" fill="#4b5363"/><text x="832" y="130.9" fill="#fff">0.55</text><rect x="540.4" y="155.1" width="21.4" height="32.4" fill="#76b7b2" fill-opacity="0.8"/><circle cx="647.4" cy="171.3" r="15.8" fill="#76b7b2" fill-opacity=".85" stroke="#3a3a3a" stroke-width="1"/><text x="647.4" y="174.9" text-anchor="middle" fill="#222">0.77</text><rect x="828.3" y="155.1" width="61.6" height="32.4" fill="#4b5363"/><text x="832" y="174.9" fill="#fff">0.55</text><rect x="540.4" y="199.1" width="1.0" height="32.4" fill="#edc948" fill-opacity="0.6"/><circle cx="671.1" cy="215.3" r="15.8" fill="#edc948" fill-opacity=".85" stroke="#3a3a3a" stroke-width="1"/><text x="671.1" y="218.9" text-anchor="middle" fill="#222">0.95</text><rect x="828.3" y="199.1" width="61.6" height="32.4" fill="#4b5363"/><text x="832" y="218.9" fill="#fff">0.55</text><rect x="540.4" y="243.1" width="1.0" height="32.4" fill="#edc948" fill-opacity="0.6"/><circle cx="677.3" cy="259.3" r="15.8" fill="#edc948" fill-opacity=".85" stroke="#3a3a3a" stroke-width="1"/><text x="677.3" y="262.9" text-anchor="middle" fill="#222">1.00</text><rect x="828.3" y="243.1" width="61.6" height="32.4" fill="#4b5363"/><text x="832" y="262.9" fill="#fff">0.55</text><rect x="659.5" y="287.3" width="10" height="0.7" fill="#555"/><rect x="828.5" y="287.3" width="22" height="0.7" fill="#4b5363"/>
<g fill="#666"><text x="540" y="305" text-anchor="middle">0.00</text><text x="609" y="305" text-anchor="middle">0.50</text><text x="677.500" y="305" text-anchor="middle">1.00</text>
<text x="716" y="305" text-anchor="middle">-1.00</text><text x="772" y="305" text-anchor="middle">-0.50</text><text x="828" y="305" text-anchor="middle">0.00</text><text x="884" y="305" text-anchor="middle">0.50</text></g>
<text x="603" y="324" text-anchor="middle">Point Biserial &amp; Difficulty</text>
<text x="800" y="324" text-anchor="middle">KR-20</text>
<text x="763" y="14" >KR-20</text>
<text x="792" y="33" text-anchor="end">-1.05</text><text x="876.700" y="33">0.55</text>
<rect x="796.500" y="23.500" width="76" height="15" fill="none" stroke="#aaa"/>
<rect x="797" y="24" width="15.200" height="14" fill="#d2d2d2"/><rect x="812" y="24" width="15.200" height="14" fill="#b1b5b7"/><rect x="827" y="24" width="15.200" height="14" fill="#8d949b"/><rect x="842" y="24" width="15.200" height="14" fill="#6a7380"/><rect x="857" y="24" width="15" height="14" fill="#4b5363"/>
<rect x="900" y="62" width="5.700" height="226" fill="#f0f0f0"/><rect x="900" y="62" width="5.700" height="14" fill="#d6d6d6"/>
</svg>

<!-- categories -->
<div class="panel" style="left:1138px;top:448px;width:241px;height:335px"></div>
<div class="pt" style="left:1143px;top:456px">Categories</div>

</body></html>
